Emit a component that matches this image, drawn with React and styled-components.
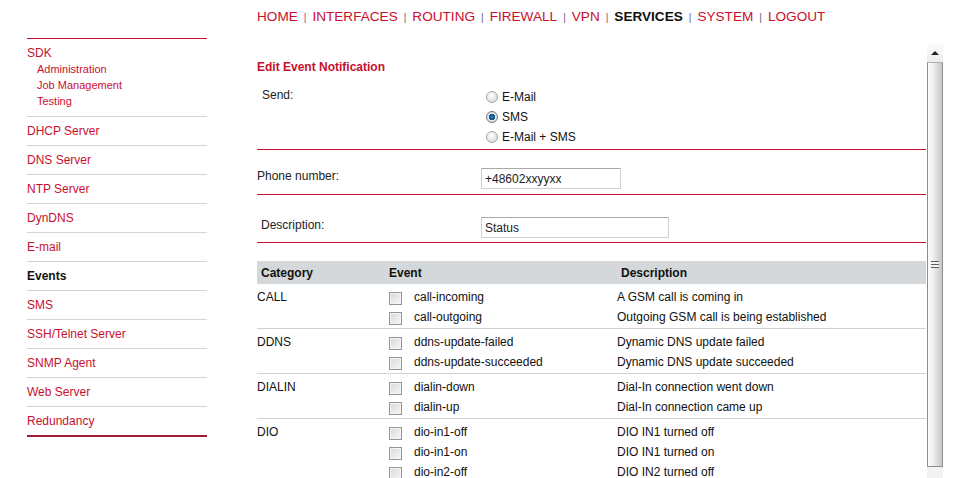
import React from 'react';
import styled, { createGlobalStyle } from 'styled-components';

const RED = '#c8102e';

const GlobalStyle = createGlobalStyle`
    body {
        margin: 0;
        background: #fff;
        font-family: "Liberation Sans", Arial, sans-serif;
        color: #222;
        overflow: hidden;
    }
`

const topLinks = ['HOME', 'INTERFACES', 'ROUTING', 'FIREWALL', 'VPN', 'SERVICES', 'SYSTEM', 'LOGOUT'];

const sideLinks = ['DHCP Server', 'DNS Server', 'NTP Server', 'DynDNS', 'E-mail', 'Events', 'SMS', 'SSH/Telnet Server', 'SNMP Agent', 'Web Server', 'Redundancy'];

const groups = [
    {
        name: 'CALL',
        events: [
            ['call-incoming', 'A GSM call is coming in'],
            ['call-outgoing', 'Outgoing GSM call is being established'],
        ],
    },
    {
        name: 'DDNS',
        events: [
            ['ddns-update-failed', 'Dynamic DNS update failed'],
            ['ddns-update-succeeded', 'Dynamic DNS update succeeded'],
        ],
    },
    {
        name: 'DIALIN',
        events: [
            ['dialin-down', 'Dial-In connection went down'],
            ['dialin-up', 'Dial-In connection came up'],
        ],
    },
    {
        name: 'DIO',
        events: [
            ['dio-in1-off', 'DIO IN1 turned off'],
            ['dio-in1-on', 'DIO IN1 turned on'],
            ['dio-in2-off', 'DIO IN2 turned off'],
            ['dio-in2-on', 'DIO IN2 turned on'],
        ],
    },
];

function App() {
    return (
        <>
        <GlobalStyle/>
        <Page>
            <Sidebar>
                <SideList>
                    <SideItem $pt={6} $pb={7}>
                        <SideLink>SDK</SideLink>
                        <SubLink>Administration</SubLink>
                        <SubLink>Job Management</SubLink>
                        <SubLink>Testing</SubLink>
                    </SideItem>
                    {sideLinks.map((l, i) => (
                        <SideItem key={l} $last={i === sideLinks.length - 1}>
                            <SideLink $active={l === 'Events'}>{l}</SideLink>
                        </SideItem>
                    ))}
                </SideList>
            </Sidebar>
            <Main>
                <TopNav>
                    {topLinks.map((l, i) => (
                        <React.Fragment key={l}>
                            {i > 0 ? <Sep>|</Sep> : null}
                            <TopLink $active={l === 'SERVICES'}>{l}</TopLink>
                        </React.Fragment>
                    ))}
                </TopNav>
                <Frame>
                    <Content>
                        <Heading>Edit Event Notification</Heading>

                        <FormRow $pb={2}>
                            <Label $top={1} $indent={5}>Send:</Label>
                            <RadioList>
                                <RadioOption>
                                    <Radio type='radio' name='send'/>
                                    <span>E-Mail</span>
                                </RadioOption>
                                <RadioOption>
                                    <Radio type='radio' name='send' defaultChecked/>
                                    <span>SMS</span>
                                </RadioOption>
                                <RadioOption>
                                    <Radio type='radio' name='send'/>
                                    <span>E-Mail + SMS</span>
                                </RadioOption>
                            </RadioList>
                        </FormRow>

                        <FormRow $pb={5}>
                            <Label $top={18} $indent={0}>Phone number:</Label>
                            <div>
                                <TextInput $top={18} $width={140} defaultValue='+48602xxyyxx'/>
                            </div>
                        </FormRow>

                        <FormRow $pb={4}>
                            <Label $top={22} $indent={4}>Description:</Label>
                            <div>
                                <TextInput $top={22} $width={188} defaultValue='Status'/>
                            </div>
                        </FormRow>

                        <Table>
                            <HeadRow>
                                <HeadCell>Category</HeadCell>
                                <HeadCell>Event</HeadCell>
                                <HeadCell>Description</HeadCell>
                            </HeadRow>
                            {groups.map(g => (
                                <Group key={g.name}>
                                    <Category>{g.name}</Category>
                                    <div>
                                        {g.events.map(([ev, desc]) => (
                                            <EventRow key={ev}>
                                                <EventCell>
                                                    <Check type='checkbox'/>
                                                    <span>{ev}</span>
                                                </EventCell>
                                                <span>{desc}</span>
                                            </EventRow>
                                        ))}
                                    </div>
                                </Group>
                            ))}
                        </Table>
                    </Content>
                    <ScrollBar>
                        <ScrollButton><Arrow/></ScrollButton>
                        <Thumb><Grip/></Thumb>
                        <Track/>
                    </ScrollBar>
                </Frame>
            </Main>
        </Page>
        </>
    )
}

export default App;

const Page = styled.div`
    display: flex;
    height: 100vh;
`

const Sidebar = styled.nav`
    margin-left: 27px;
    width: 180px;
    padding-top: 38px;
    flex-shrink: 0;
`

const SideList = styled.div`
    border-top: 1px solid ${RED};
`

const SideItem = styled.div`
    padding: ${p => p.$pt || 6}px 0 ${p => p.$pb || 6}px;
    border-bottom: ${p => p.$last ? '2px solid #9b1c3c' : '1px solid #d3d3db'};
`

const SideLink = styled.a`
    display: block;
    font-size: 12px;
    line-height: 16px;
    color: ${p => p.$active ? '#111' : RED};
    font-weight: ${p => p.$active ? 'bold' : 'normal'};
    text-decoration: none;
`

const SubLink = styled.a`
    display: block;
    padding-left: 10px;
    font-size: 11px;
    line-height: 16px;
    color: ${RED};
    text-decoration: none;
`

const Main = styled.div`
    margin-left: 50px;
    display: flex;
    flex-direction: column;
    flex: 1;
    min-width: 0;
`

const TopNav = styled.div`
    display: flex;
    align-items: baseline;
    padding-top: 9px;
    height: 16px;
    margin-bottom: 19px;
    line-height: 16px;
`

const TopLink = styled.a`
    font-size: 13.6px;
    color: ${p => p.$active ? '#111' : RED};
    font-weight: ${p => p.$active ? 'bold' : 'normal'};
    text-decoration: none;
`

const Sep = styled.span`
    font-size: 10px;
    color: #6e5a80;
    padding: 0 6px;
`

const Frame = styled.div`
    display: flex;
    flex: 1;
    min-height: 0;
`

const Content = styled.div`
    width: 670px;
    overflow: hidden;
    padding-top: 15px;
    font-size: 12px;
`

const Heading = styled.h3`
    margin: 0 0 11px;
    font-size: 12px;
    line-height: 16px;
    color: ${RED};
`

const FormRow = styled.div`
    display: grid;
    grid-template-columns: 224px 1fr;
    align-items: start;
    width: 669px;
    padding-bottom: ${p => p.$pb}px;
    border-bottom: 1px solid ${RED};
`

const Label = styled.div`
    padding-top: ${p => p.$top}px;
    padding-left: ${p => p.$indent}px;
    line-height: 16px;
    color: #222;
`

const RadioList = styled.div`
    margin-top: 1px;
`

const RadioOption = styled.label`
    display: flex;
    align-items: center;
    height: 20px;
    color: #111;
`

const Radio = styled.input`
    appearance: none;
    margin: 0 4px 0 5px;
    width: 12px;
    height: 12px;
    border-radius: 50%;
    border: 1px solid #a6a6a6;
    box-sizing: border-box;
    background: radial-gradient(circle at 40% 35%, #ffffff 0%, #e6e6e6 55%, #cfcfcf 100%);

    &:checked {
        border-color: #6b7c8c;
        background: radial-gradient(circle at 50% 50%, #2a8ad6 0%, #0f5d9e 30%, #2f4d66 42%, #e8e8e8 50%, #d2d2d2 100%);
    }
`

const TextInput = styled.input`
    box-sizing: border-box;
    margin-top: ${p => p.$top}px;
    width: ${p => p.$width}px;
    height: 21px;
    padding: 0 3px;
    border: 1px solid #d0d0d0;
    border-top-color: #a9a9a9;
    font-family: inherit;
    font-size: 12px;
    color: #222;
    outline: none;
`

const Table = styled.div`
    margin-top: 18px;
    width: 669px;
`

const HeadRow = styled.div`
    display: grid;
    grid-template-columns: 128px 232px 1fr;
    align-items: center;
    height: 23px;
    background: #d4d8db;
    font-weight: bold;
    color: #111;
`

const HeadCell = styled.div`
    padding-left: 4px;
`

const Group = styled.div`
    display: grid;
    grid-template-columns: 128px 1fr;
    padding: 3px 0 1px;
    border-bottom: 1px solid #d2d2d2;
`

const Category = styled.div`
    line-height: 20px;
    color: #111;
`

const EventRow = styled.div`
    display: grid;
    grid-template-columns: 232px 1fr;
    align-items: center;
    height: 20px;
    color: #111;
`

const EventCell = styled.label`
    display: flex;
    align-items: center;
`

const Check = styled.input`
    appearance: none;
    box-sizing: border-box;
    margin: 2px 12px 0 4px;
    width: 13px;
    height: 13px;
    border: 1px solid #959595;
    background: linear-gradient(135deg, #d6d6d6 0%, #e8e8e8 50%, #f7f7f7 100%);
    box-shadow: inset 0 0 0 1px #f4f4f4;
`

const ScrollBar = styled.div`
    display: flex;
    flex-direction: column;
    width: 16px;
    background: #f0f0f0;
`

const ScrollButton = styled.div`
    display: flex;
    align-items: center;
    justify-content: center;
    height: 18px;
    background: linear-gradient(#fbfbfb, #ececec);
`

const Arrow = styled.span`
    width: 0;
    height: 0;
    border-left: 4px solid transparent;
    border-right: 4px solid transparent;
    border-bottom: 4px solid #222;
`

const Thumb = styled.div`
    display: flex;
    align-items: center;
    justify-content: center;
    height: 405px;
    box-sizing: border-box;
    border: 1px solid #8e8e8e;
    border-top-color: #b0b0b0;
    border-radius: 1px;
    background: linear-gradient(to right, #fdfdfd 0%, #f0f0f0 35%, #d6d6d6 75%, #c6c6c6 100%);
`

const Grip = styled.span`
    width: 8px;
    height: 7px;
    background: repeating-linear-gradient(#5e5e5e 0 1px, #f4f4f4 1px 3px);
`

const Track = styled.div`
    flex: 1;
    background: #f3f3f3;
`
